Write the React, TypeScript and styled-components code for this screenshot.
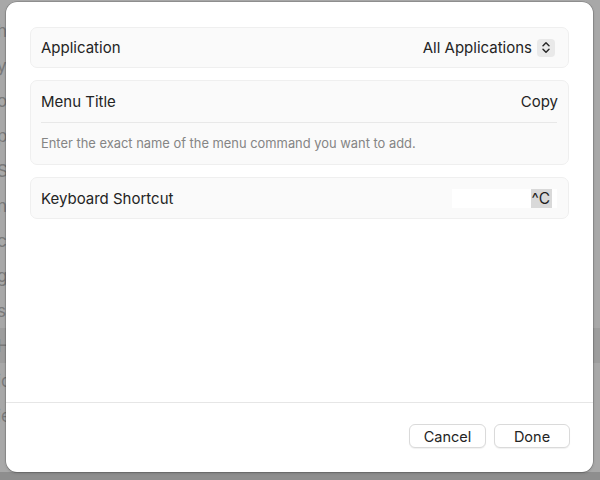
import React from "react";
import styled, { createGlobalStyle } from "styled-components";

const Global = createGlobalStyle`
  html, body { margin: 0; padding: 0; }
  body {
    width: 600px;
    height: 480px;
    overflow: hidden;
    background: #a9a9a9;
    font-family: Inter, "Noto Sans", "Liberation Sans", sans-serif;
    -webkit-font-smoothing: antialiased;
  }
  #root { width: 600px; height: 480px; }
`;

const Stage = styled.div`
  position: relative;
  width: 600px;
  height: 480px;
  overflow: hidden;
  display: flex;
  flex-direction: column;
  background: #a8a8a8;
`;

const BehindList = styled.div`
  flex: 1;
  display: flex;
  flex-direction: column;
  padding-top: 13px;
`;

const BehindRow = styled.div<{ $active?: boolean }>`
  height: 35px;
  display: flex;
  align-items: center;
  font-size: 17px;
  color: #7a7a7a;
  background: ${(p) => (p.$active ? "#9d9d9d" : "transparent")};
  span { margin-left: -3px; }
`;

const BehindBottom = styled.div`
  height: 8px;
  background: #8e8e8e;
  display: flex;
`;

const Sheet = styled.div`
  position: absolute;
  left: 6px;
  top: 2px;
  width: 587px;
  height: 470px;
  background: #ffffff;
  border-radius: 11px;
  box-shadow: 0 0 0 0.5px rgba(0, 0, 0, 0.25), 0 1px 3px rgba(0, 0, 0, 0.2);
  display: flex;
  flex-direction: column;
  overflow: hidden;
`;

const Body = styled.div`
  flex: 1;
  display: flex;
  flex-direction: column;
  gap: 12px;
  padding: 25px 24px 0 24px;
`;

const Card = styled.div`
  background: #fafafa;
  border: 1px solid #efefef;
  border-radius: 7px;
  display: flex;
  flex-direction: column;
  padding: 0 10px;
`;

const Row = styled.div<{ $h?: number }>`
  height: ${(p) => p.$h ?? 40}px;
  display: flex;
  align-items: center;
  justify-content: space-between;
  font-size: 15px;
  color: #242424;
`;

const Divider = styled.div`
  height: 1px;
  background: #e8e8e8;
  margin-right: 1px;
`;

const Helper = styled.div`
  height: 41px;
  display: flex;
  align-items: center;
  font-size: 12.9px;
  color: #858585;
`;

const Value = styled.div`
  display: flex;
  align-items: center;
  gap: 5px;
`;

const Stepper = styled.div`
  width: 18px;
  height: 18px;
  border-radius: 4px;
  background: #e9e9e9;
  display: flex;
  align-items: center;
  justify-content: center;
  margin-right: 3px;
`;

const ShortcutField = styled.div`
  width: 105px;
  height: 19px;
  background: #ffffff;
  display: flex;
  justify-content: flex-end;
  align-items: stretch;
  margin-right: 1px;
`;

const KeyCombo = styled.span`
  background: #d9d9d9;
  padding: 0 2px 0 1px;
  margin-right: 5px;
  display: flex;
  align-items: center;
  font-size: 15.5px;
  color: #1e1e1e;
`;

const Footer = styled.div`
  height: 70px;
  border-top: 1px solid #e6e6e6;
  display: flex;
  align-items: center;
  justify-content: flex-end;
  gap: 8px;
  padding: 0 23px 3px 0;
  box-sizing: border-box;
`;

const Button = styled.button<{ $w: number }>`
  height: 24px;
  width: ${(p) => p.$w}px;
  border-radius: 6px;
  border: 1px solid #dadada;
  background: #ffffff;
  box-shadow: 0 1px 1px rgba(0, 0, 0, 0.06);
  font-family: inherit;
  font-size: 14.5px;
  color: #242424;
  padding: 0;
`;

const Chevrons = () => (
  <svg width="10" height="13" viewBox="0 0 10 13" fill="none">
    <path d="M2 4.8 L5 1.8 L8 4.8" stroke="#2a2a2a" strokeWidth="1.5" strokeLinecap="round" strokeLinejoin="round" />
    <path d="M2 8.2 L5 11.2 L8 8.2" stroke="#2a2a2a" strokeWidth="1.5" strokeLinecap="round" strokeLinejoin="round" />
  </svg>
);

const behind = ["h", "y", "or", "pa", "S", "n", "ce", "g", "s", "H", "ic", "ie"];

export default function App() {
  return (
    <>
      <Global />
      <Stage>
        <BehindList>
          {behind.map((t, i) => (
            <BehindRow key={i} $active={i === 9}>
              <span>{t}</span>
            </BehindRow>
          ))}
        </BehindList>
        <BehindBottom />
        <Sheet>
          <Body>
            <Card>
              <Row $h={39}>
                <span>Application</span>
                <Value>
                  <span>All Applications</span>
                  <Stepper>
                    <Chevrons />
                  </Stepper>
                </Value>
              </Row>
            </Card>
            <Card>
              <Row $h={41}>
                <span>Menu Title</span>
                <span>Copy</span>
              </Row>
              <Divider />
              <Helper>Enter the exact name of the menu command you want to add.</Helper>
            </Card>
            <Card>
              <Row $h={40}>
                <span>Keyboard Shortcut</span>
                <ShortcutField>
                  <KeyCombo>^C</KeyCombo>
                </ShortcutField>
              </Row>
            </Card>
          </Body>
          <Footer>
            <Button $w={77}>Cancel</Button>
            <Button $w={76}>Done</Button>
          </Footer>
        </Sheet>
      </Stage>
    </>
  );
}
